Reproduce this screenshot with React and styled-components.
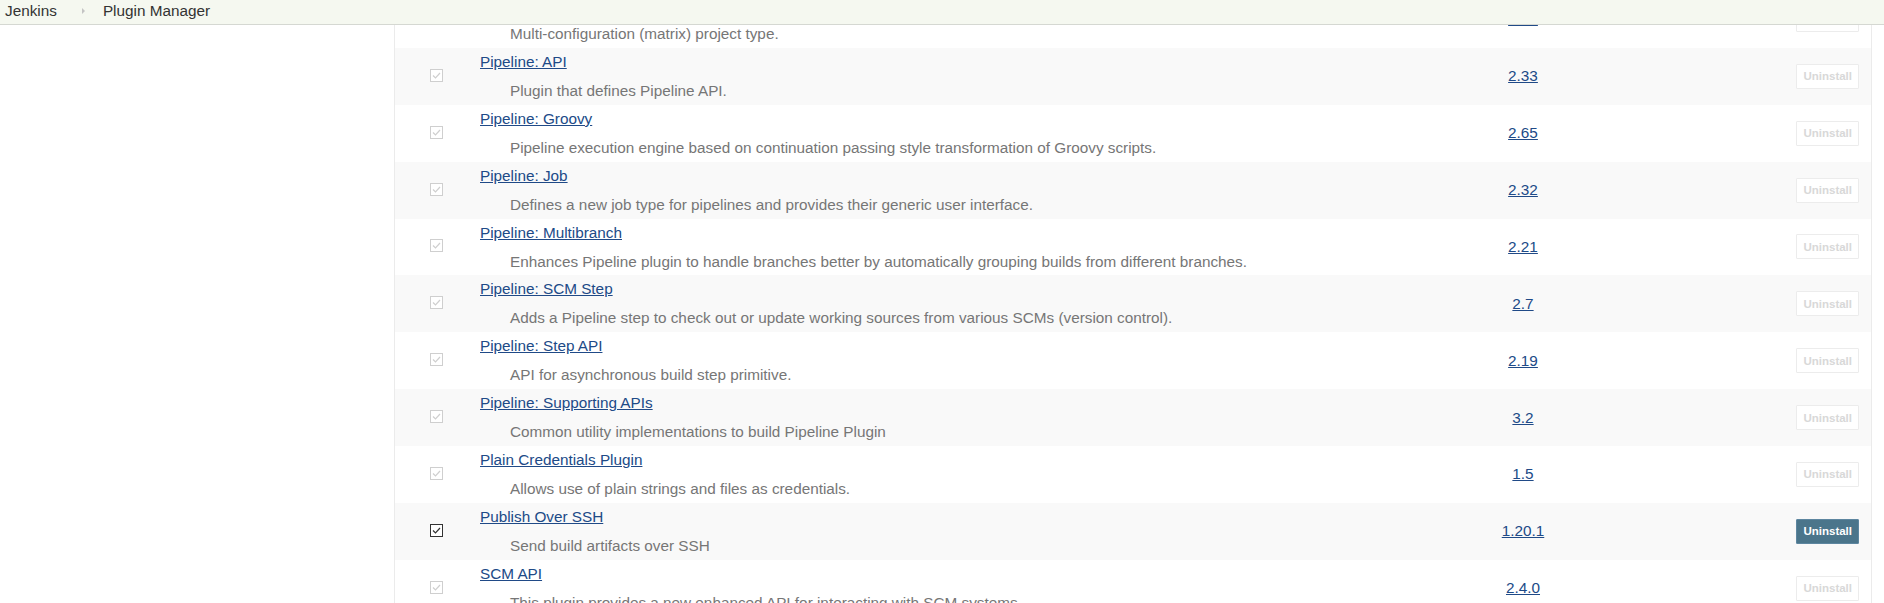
import React from "react";
import styled, { createGlobalStyle } from "styled-components";

const GlobalStyle = createGlobalStyle`
  html, body {
    margin: 0;
    padding: 0;
    overflow: hidden;
    background: #fff;
    font-family: "Liberation Sans", Arial, Helvetica, sans-serif;
  }
`;

const Breadcrumbs = styled.div`
  position: fixed;
  top: 0;
  left: 0;
  right: 0;
  z-index: 10;
  height: 24px;
  display: flex;
  align-items: flex-start;
  padding-left: 5px;
  background-color: #f5f8f0;
  border-bottom: 1px solid #d5d8d2;
  font-size: 15.3px;
  line-height: 22px;
  color: #333;
`;

const Crumb = styled.span`
  white-space: nowrap;
`;

const Separator = styled.span`
  width: 0;
  height: 0;
  margin: 8px 18px 0 25px;
  border-top: 3px solid transparent;
  border-bottom: 3px solid transparent;
  border-left: 3px solid #c4c4c4;
`;

const Page = styled.div`
  display: flex;
  height: 100vh;
  overflow: hidden;
`;

const SidePanel = styled.div`
  width: 394px;
  flex-shrink: 0;
`;

const Main = styled.div`
  width: 1478px;
  flex-shrink: 0;
`;

// the page is scrolled a little: the first row sits partly under the bar
const Table = styled.div`
  margin-top: -9px;
  border-left: 1px solid #ebebeb;
  border-right: 1px solid #ebebeb;
`;

const Row = styled.div`
  display: grid;
  grid-template-columns: 83px 1fr 100px 298px;
  height: 56.875px;
  background-color: ${(p) => (p.$shaded ? "#f9f9f9" : "#fff")};
`;

const CheckCell = styled.div`
  display: flex;
  align-items: center;
  justify-content: center;
  padding-bottom: 2px;
`;

const NameCell = styled.div`
  padding: 4px 0 0 2px;
  font-size: 15.3px;
  line-height: 20px;
`;

const Title = styled.a`
  color: #204a87;
  text-decoration: underline;
  cursor: pointer;
`;

const Excerpt = styled.div`
  margin-top: 9px;
  padding-left: 30px;
  color: #767676;
  white-space: nowrap;
`;

const VersionCell = styled.div`
  display: flex;
  align-items: center;
  justify-content: center;
  font-size: 15.3px;
`;

const ActionCell = styled.div`
  display: flex;
  align-items: center;
  justify-content: flex-end;
  padding-right: 12px;
`;

const UninstallButton = styled.button`
  height: 25px;
  padding: 0 6px;
  font-family: "Liberation Sans", Arial, Helvetica, sans-serif;
  font-size: 11.5px;
  font-weight: bold;
  border-radius: 1px;
  border: 1px solid ${(p) => (p.disabled ? "#ececec" : "#5d86a0")};
  background-color: ${(p) => (p.disabled ? "#fff" : "#4b758b")};
  color: ${(p) => (p.disabled ? "#d8d8d8" : "#fff")};
`;

function CheckBox({ active }) {
  const c = active ? "#333" : "#cfcfcf";
  return (
    <svg width="13" height="13" viewBox="0 0 13 13">
      <rect x="0.5" y="0.5" width="12" height="12" fill="#fff" stroke={c} />
      <polyline
        points="3,6.5 5.5,9 10,4"
        fill="none"
        stroke={c}
        strokeWidth="1.2"
      />
    </svg>
  );
}

const plugins = [
  { name: "Matrix Project Plugin", excerpt: "Multi-configuration (matrix) project type.", version: "1.14" },
  { name: "Pipeline: API", excerpt: "Plugin that defines Pipeline API.", version: "2.33" },
  { name: "Pipeline: Groovy", excerpt: "Pipeline execution engine based on continuation passing style transformation of Groovy scripts.", version: "2.65" },
  { name: "Pipeline: Job", excerpt: "Defines a new job type for pipelines and provides their generic user interface.", version: "2.32" },
  { name: "Pipeline: Multibranch", excerpt: "Enhances Pipeline plugin to handle branches better by automatically grouping builds from different branches.", version: "2.21" },
  { name: "Pipeline: SCM Step", excerpt: "Adds a Pipeline step to check out or update working sources from various SCMs (version control).", version: "2.7" },
  { name: "Pipeline: Step API", excerpt: "API for asynchronous build step primitive.", version: "2.19" },
  { name: "Pipeline: Supporting APIs", excerpt: "Common utility implementations to build Pipeline Plugin", version: "3.2" },
  { name: "Plain Credentials Plugin", excerpt: "Allows use of plain strings and files as credentials.", version: "1.5" },
  { name: "Publish Over SSH", excerpt: "Send build artifacts over SSH", version: "1.20.1", active: true },
  { name: "SCM API", excerpt: "This plugin provides a new enhanced API for interacting with SCM systems.", version: "2.4.0" },
];

export default function App() {
  return (
    <>
      <GlobalStyle />
      <Breadcrumbs>
        <Crumb>Jenkins</Crumb>
        <Separator />
        <Crumb>Plugin Manager</Crumb>
      </Breadcrumbs>
      <Page>
        <SidePanel />
        <Main>
          <Table>
            {plugins.map((p, i) => (
              <Row key={p.name} $shaded={i % 2 === 1}>
                <CheckCell>
                  <CheckBox active={p.active} />
                </CheckCell>
                <NameCell>
                  <Title>{p.name}</Title>
                  <Excerpt>{p.excerpt}</Excerpt>
                </NameCell>
                <VersionCell>
                  <Title>{p.version}</Title>
                </VersionCell>
                <ActionCell>
                  <UninstallButton disabled={!p.active}>Uninstall</UninstallButton>
                </ActionCell>
              </Row>
            ))}
          </Table>
        </Main>
      </Page>
    </>
  );
}
